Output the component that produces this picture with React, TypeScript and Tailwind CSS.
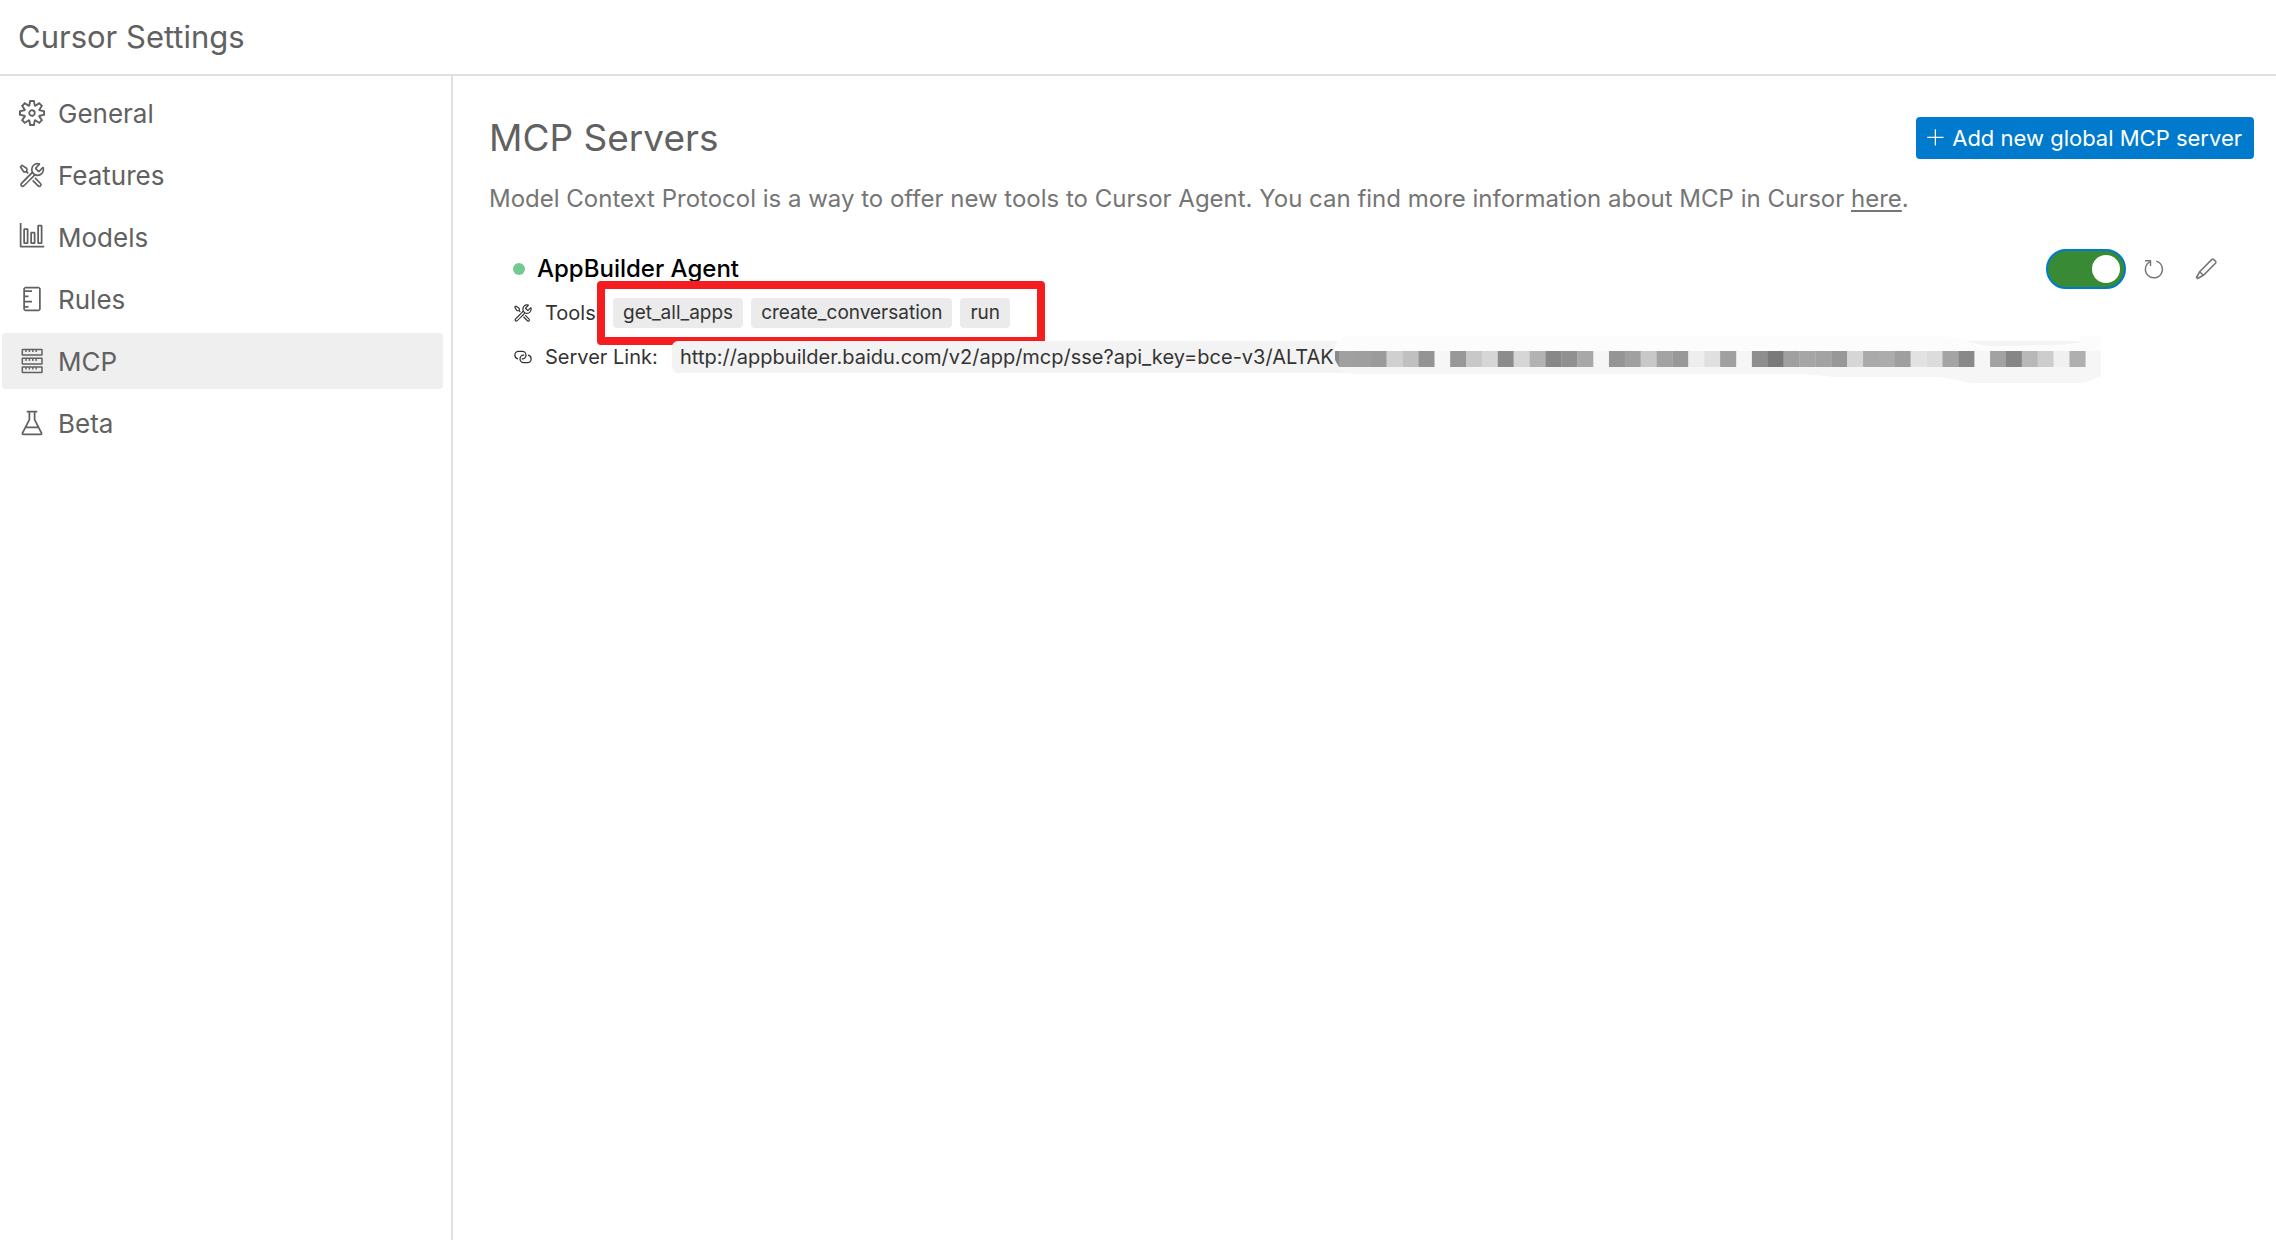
import { useState } from "react";
import {
  VscAdd,
  VscBeaker,
  VscEdit,
  VscGraph,
  VscLink,
  VscSettingsGear,
  VscSymbolRuler,
  VscTools,
} from "react-icons/vsc";

function ServerIcon({ className }: { className?: string }) {
  return (
    <svg aria-hidden="true" viewBox="0 0 28 28" fill="none" stroke="currentColor" strokeWidth="1.5" className={className}>
      {[2.5, 11.3, 20].map((y) => (
        <g key={y}>
          <rect x="4.3" y={y} width="19.7" height="5.6" rx="0.5" />
          <path d={`M8 ${y}v2.6M11.4 ${y}v2.6M14.8 ${y}v2.6M18.2 ${y}v2.6`} strokeWidth="1.4" />
        </g>
      ))}
    </svg>
  );
}

function RefreshIcon({ className }: { className?: string }) {
  return (
    <svg aria-hidden="true" viewBox="0 0 24 24" fill="none" stroke="currentColor" strokeWidth="1.4" className={className}>
      <path d="M3 3.7H8.5V9" />
      <path d="M8.3 4.6A8.5 8.5 0 1 0 14.2 4.1" />
    </svg>
  );
}

const navItems = [
  { label: "General", Icon: VscSettingsGear, iconClass: "size-7 p-px" },
  { label: "Features", Icon: VscTools, iconClass: "size-7" },
  { label: "Models", Icon: VscGraph, iconClass: "size-7" },
  { label: "Rules", Icon: VscSymbolRuler, iconClass: "size-7" },
  { label: "MCP", Icon: ServerIcon, iconClass: "size-7" },
  { label: "Beta", Icon: VscBeaker, iconClass: "size-7" },
];

const tools = ["get_all_apps", "create_conversation", "run"];

// Grey level of each mosaic cell; null leaves a hole.
const mosaic: (string | null)[] = [
  "a0", "9f", "9b", "d0", "c0", "94", null, "98", "c8", "d6", "8c", "d6", "b2", "88", "90", "a8",
  null, "95", "a0", "c8", "a3", "98", "ee", "e0", "a0", null, "8e", "7a", "a0", "a6", "a3", "98",
  "d6", "aa", "ac", "9f", "e2", "dc", "a4", "89", null, "a2", "86", "b8", "cd", "f0", "af",
];

function Redaction() {
  const cell = 15.88;
  return (
    <svg
      aria-hidden="true"
      viewBox="0 0 768 48"
      className="absolute -top-[5px] left-[662px] h-12 w-[768px]"
    >
      <path d="M0 15 Q2 2 12 0 H606 Q622 1 636 6 Q652 11 668 10 L710 9 Q736 9 746 6 V0 H767 V15Z" fill="#fcfcfc" />
      <path d="M3 15 H767 V40 L752 46 Q748 47 740 47 H640 Q628 46 618 43 Q608 41 600 41 H500 L470 38 H20 Q8 36 4 31 Z" fill="#f6f6f6" />
      <path d="M1 15 H5 V31 L1 24Z" fill="#8a8a8a" />
      {mosaic.map((c, i) =>
        c ? <rect key={i} x={5 + i * cell} y={15} width={cell + 0.2} height={16} fill={`#${c}${c}${c}`} /> : null,
      )}
    </svg>
  );
}

export default function App() {
  const [active, setActive] = useState("MCP");
  const [enabled, setEnabled] = useState(true);

  return (
    <div className="flex min-h-screen flex-col bg-white font-['Inter','Liberation_Sans',sans-serif] text-[#616161]">
      <header className="border-b-2 border-[#e0e0e0] px-[18px] pt-[17px] pb-[17px]">
        <h1 className="text-[31px] leading-10">Cursor Settings</h1>
      </header>

      <div className="flex flex-1">
        <nav className="flex w-[453px] shrink-0 flex-col gap-1.5 border-r-2 border-[#e0e0e0] pt-[9px] pr-2 pl-0.5">
          {navItems.map(({ label, Icon, iconClass }) => (
            <button
              key={label}
              type="button"
              onClick={() => setActive(label)}
              className={`flex h-14 items-center gap-3 rounded px-4 text-left text-[26px] ${
                active === label ? "bg-[#efefef]" : ""
              }`}
            >
              <Icon className={iconClass} />
              {label}
            </button>
          ))}
        </nav>

        <main className="min-w-0 flex-1 pt-[39px] pr-[22px] pl-9">
          <div className="flex items-center justify-between">
            <h2 className="text-[37px] leading-[46px]">MCP Servers</h2>
            <button
              type="button"
              className="flex h-[42px] items-center gap-1.5 rounded-sm bg-[#007acc] pr-3 pl-2.5 text-[22px] text-white"
            >
              <VscAdd className="size-5" />
              Add new global MCP server
            </button>
          </div>

          <p className="mt-[22px] text-2xl leading-8 text-[#757575]">
            Model Context Protocol is a way to offer new tools to Cursor Agent. You can find more information about MCP
            in Cursor{" "}
            <a href="#docs" className="underline decoration-2 underline-offset-3">
              here
            </a>
            .
          </p>

          <section className="mt-[34px] flex flex-col pl-6 text-[#333333]">
            <div className="flex h-10 items-center">
              <span className="size-3 rounded-full bg-[#73c991]" />
              <h3 className="ml-3 text-2xl font-medium text-black">AppBuilder Agent</h3>
              <div className="mr-9 ml-auto flex items-center text-[#757575]">
                <label className="relative mr-4 h-10 w-20 cursor-pointer">
                  <input
                    type="checkbox"
                    role="switch"
                    aria-label="Enable AppBuilder Agent"
                    checked={enabled}
                    onChange={() => setEnabled(!enabled)}
                    className="peer h-full w-full cursor-pointer appearance-none rounded-full border-2 border-[#007acc] bg-gray-300 checked:bg-[#388a34]"
                  />
                  <span className="pointer-events-none absolute top-1.5 left-1.5 size-7 rounded-full bg-white peer-checked:left-[46px]" />
                </label>
                <button type="button" aria-label="Refresh">
                  <RefreshIcon className="size-6" />
                </button>
                <button type="button" aria-label="Edit" className="ml-7">
                  <VscEdit className="size-6" />
                </button>
              </div>
            </div>

            <div className="mt-1 flex h-10 items-center">
              <VscTools className="size-5" />
              <span className="ml-3 w-[52px] text-xl">Tools</span>
              <ul className="-my-3 flex w-[448px] items-center gap-2 rounded border-8 border-[#f51d1f] px-2 py-[9px]">
                {tools.map((tool) => (
                  <li key={tool} className="rounded bg-[#ebebeb] px-2.5 text-[19px] leading-[30px]">
                    {tool}
                  </li>
                ))}
              </ul>
            </div>

            <div className="mt-1 flex h-10 items-center">
              <VscLink className="size-5" />
              <span className="ml-3 w-[127px] text-xl">Server Link:</span>
              <div className="relative h-8 w-[1411px] rounded-md bg-[#f3f3f3] px-2 text-xl leading-8">
                http://appbuilder.baidu.com/v2/app/mcp/sse?api_key=bce-v3/ALTAK
                <Redaction />
              </div>
            </div>
          </section>
        </main>
      </div>
    </div>
  );
}
